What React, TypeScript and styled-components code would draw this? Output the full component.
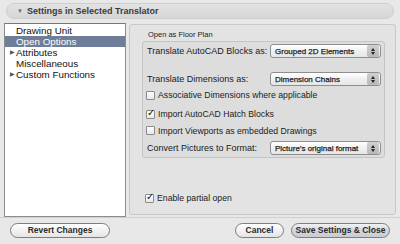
import styled, { createGlobalStyle } from "styled-components";

const GlobalStyle = createGlobalStyle`
  html, body {
    margin: 0;
    padding: 0;
    background: #e8e8e8;
  }
  * {
    box-sizing: border-box;
  }
`;

const Window = styled.div`
  width: 400px;
  height: 244px;
  background: #e8e8e8;
  font-family: "Liberation Sans", Arial, sans-serif;
  font-size: 9px;
  color: #1a1a1a;
  display: flex;
  flex-direction: column;
  overflow: hidden;
`;

const HeaderBar = styled.div`
  margin: 3px 6px 0 6px;
  height: 16px;
  border-radius: 8px;
  background: linear-gradient(#e2e2e2, #d6d6d6);
  border: 1px solid #cfcfcf;
  display: flex;
  align-items: center;
  padding-left: 10px;
  gap: 4px;
  font-weight: bold;
  color: #3a3a3a;
`;

const Triangle = styled.span`
  font-size: 6px;
  color: #6a6a6a;
`;

const Body = styled.div`
  display: flex;
  gap: 3px;
  padding: 4px 4px 0 4px;
  height: 198px;
`;

const List = styled.div`
  width: 122px;
  background: #fff;
  border: 1px solid #8c8c8c;
  border-top-color: #777;
  padding-top: 1px;
  display: flex;
  flex-direction: column;
  font-size: 9.8px;
`;

const ListRow = styled.div<{ $selected?: boolean }>`
  height: 11px;
  line-height: 11px;
  padding-left: 11px;
  background: ${(p) => (p.$selected ? "#6f7e98" : "transparent")};
  color: ${(p) => (p.$selected ? "#fff" : "#111")};
  display: flex;
  align-items: center;
  position: relative;
`;

const Disclosure = styled.span`
  position: absolute;
  left: 5px;
  font-size: 6px;
  color: #555;
`;

const Panel = styled.div`
  flex: 1;
  margin-top: 1px;
  margin-bottom: 2px;
  background: #e3e3e3;
  border: 1px solid #c8c8c8;
  border-radius: 3px;
  padding: 5px 10px 0 12px;
  display: flex;
  flex-direction: column;
`;

const GroupTitle = styled.div`
  font-size: 7.5px;
  padding-left: 6px;
  height: 10px;
  line-height: 10px;
  color: #222;
`;

const GroupBox = styled.div`
  margin-top: 1px;
  border: 1px solid #c4c4c4;
  border-radius: 3px;
  background: #dddddd;
  padding: 1px 3px 0 3px;
  display: flex;
  flex-direction: column;
`;

const Row = styled.div<{ $h: number; $top?: number }>`
  height: ${(p) => p.$h}px;
  margin-top: ${(p) => p.$top ?? 0}px;
  display: flex;
  align-items: center;
  justify-content: space-between;
`;

const Label = styled.span`
  padding-left: 1px;
`;

const Select = styled.div`
  width: 111px;
  height: 14px;
  border: 1px solid #8e8e8e;
  border-radius: 3px;
  background: linear-gradient(#ffffff, #f0f0f0 50%, #e6e6e6);
  display: flex;
  align-items: center;
  justify-content: space-between;
  padding-left: 4px;
  font-size: 8px;
  -webkit-text-stroke: 0.25px #222;
  white-space: nowrap;
  color: #222;
`;

const Stepper = styled.div`
  width: 12px;
  height: 12px;
  margin-right: 1px;
  border-radius: 2px;
  background: linear-gradient(#d0d0d0, #b8b8b8);
  display: flex;
  flex-direction: column;
  align-items: center;
  justify-content: center;
  gap: 1px;
  flex-shrink: 0;
`;

const Arrow = styled.span<{ $up?: boolean }>`
  width: 0;
  height: 0;
  border-left: 2px solid transparent;
  border-right: 2px solid transparent;
  ${(p) =>
    p.$up ? "border-bottom: 3px solid #222;" : "border-top: 3px solid #222;"}
`;

const CheckRow = styled.label<{ $h: number }>`
  height: ${(p) => p.$h}px;
  display: flex;
  align-items: center;
  gap: 3px;
  font-size: 8.7px;
`;

const Box = styled.span`
  width: 9px;
  height: 9px;
  border: 1px solid #8a8a8a;
  border-radius: 1px;
  background: linear-gradient(#ffffff, #e8e8e8);
  position: relative;
  flex-shrink: 0;
`;

const Tick = styled.span`
  position: absolute;
  left: 0px;
  top: -4px;
  font-size: 10px;
  font-weight: bold;
  color: #111;
  font-family: "DejaVu Sans", sans-serif;
`;

const Spacer = styled.div`
  flex: 1;
`;

const PartialRow = styled(CheckRow)`
  margin: 0 0 9px 3px;
`;

const Footer = styled.div`
  display: flex;
  align-items: center;
  padding: 0 10px 0 10px;
  height: 25px;
  border-top: 1px solid #d0d0d0;
  gap: 7px;
`;

const Button = styled.div<{ $w: number; $default?: boolean }>`
  width: ${(p) => p.$w}px;
  height: 15px;
  border: 1px solid #7e7e7e;
  border-radius: 8px;
  background: ${(p) =>
    p.$default
      ? "linear-gradient(#f2f2f4, #d4d6da 50%, #c9ccd1)"
      : "linear-gradient(#ffffff, #f2f2f2 50%, #e4e4e4)"};
  display: flex;
  align-items: center;
  justify-content: center;
  font-weight: bold;
  font-size: 8.5px;
  color: #2a2a2a;
`;

const Checkbox = ({ checked }: { checked?: boolean }) => (
  <Box>{checked && <Tick>✓</Tick>}</Box>
);

const Dropdown = ({ value }: { value: string }) => (
  <Select>
    <span>{value}</span>
    <Stepper>
      <Arrow $up />
      <Arrow />
    </Stepper>
  </Select>
);

export default function App() {
  return (
    <Window>
      <GlobalStyle />
      <HeaderBar>
        <Triangle>▼</Triangle>
        Settings in Selected Translator
      </HeaderBar>
      <Body>
        <List>
          <ListRow>Drawing Unit</ListRow>
          <ListRow $selected>Open Options</ListRow>
          <ListRow>
            <Disclosure>▶</Disclosure>Attributes
          </ListRow>
          <ListRow>Miscellaneous</ListRow>
          <ListRow>
            <Disclosure>▶</Disclosure>Custom Functions
          </ListRow>
        </List>
        <Panel>
          <GroupTitle>Open as Floor Plan</GroupTitle>
          <GroupBox>
            <Row $h={16}>
              <Label>Translate AutoCAD Blocks as:</Label>
              <Dropdown value="Grouped 2D Elements" />
            </Row>
            <Row $h={14} $top={13}>
              <Label>Translate Dimensions as:</Label>
              <Dropdown value="Dimension Chains" />
            </Row>
            <CheckRow $h={18}>
              <Checkbox />
              Associative Dimensions where applicable
            </CheckRow>
            <CheckRow $h={20}>
              <Checkbox checked />
              Import AutoCAD Hatch Blocks
            </CheckRow>
            <CheckRow $h={13}>
              <Checkbox />
              Import Viewports as embedded Drawings
            </CheckRow>
            <Row $h={18} $top={2}>
              <Label>Convert Pictures to Format:</Label>
              <Dropdown value="Picture's original format" />
            </Row>
          </GroupBox>
          <Spacer />
          <PartialRow $h={14}>
            <Checkbox checked />
            Enable partial open
          </PartialRow>
        </Panel>
      </Body>
      <Footer>
        <Button $w={100}>Revert Changes</Button>
        <Spacer />
        <Button $w={49}>Cancel</Button>
        <Button $w={99} $default>
          Save Settings &amp; Close
        </Button>
      </Footer>
    </Window>
  );
}
